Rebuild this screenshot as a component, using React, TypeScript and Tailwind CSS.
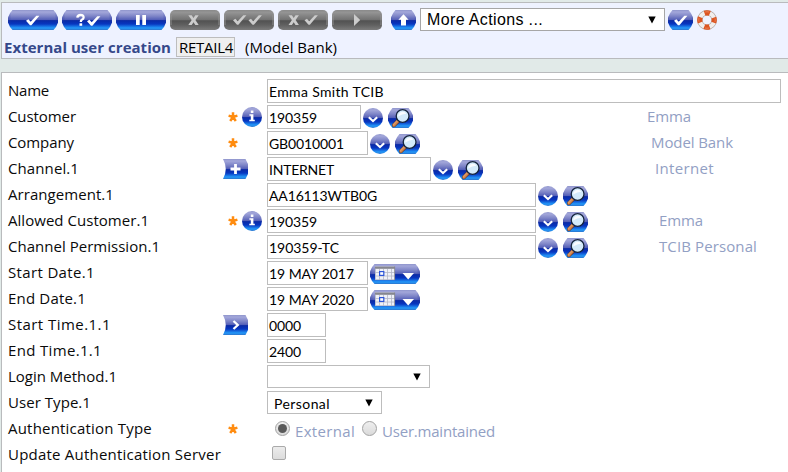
import { useLayoutEffect, useRef, useState, type ReactNode } from 'react';

const LABEL = "font-['Open_Sans','Noto_Sans',sans-serif] text-[15px]";
const VALUE = "font-['Lato','Noto_Sans',sans-serif] text-[14px]";

/* Text whose letter spacing is set so that it fills a given width. */
function Fit({ w, className = '', children }: { w: number; className?: string; children: string }) {
  const ref = useRef<HTMLSpanElement>(null);
  const [spacing, setSpacing] = useState(0);
  useLayoutEffect(() => {
    if (ref.current) {
      const natural = ref.current.getBoundingClientRect().width;
      setSpacing((w - natural) / children.length);
    }
  }, []);
  return (
    <span ref={ref} className={`inline-block whitespace-pre ${className}`} style={{ letterSpacing: `${spacing}px` }}>
      {children}
    </span>
  );
}

function Gradients() {
  return (
    <svg className="absolute h-0 w-0" aria-hidden="true">
      <defs>
        <linearGradient id="blue" x1="0" y1="0" x2="0" y2="1">
          <stop offset="0" stopColor="#8f95cc" />
          <stop offset="0.1" stopColor="#a3a7da" />
          <stop offset="0.3" stopColor="#7f86c8" />
          <stop offset="0.48" stopColor="#5560b8" />
          <stop offset="0.53" stopColor="#0a2aa6" />
          <stop offset="0.7" stopColor="#0736c0" />
          <stop offset="0.9" stopColor="#2399fa" />
          <stop offset="1" stopColor="#2c74cc" />
        </linearGradient>
        <linearGradient id="gray" x1="0" y1="0" x2="0" y2="1">
          <stop offset="0" stopColor="#8a8a8a" />
          <stop offset="0.12" stopColor="#949494" />
          <stop offset="0.48" stopColor="#727272" />
          <stop offset="0.54" stopColor="#525252" />
          <stop offset="0.75" stopColor="#606060" />
          <stop offset="1" stopColor="#7c7c7c" />
        </linearGradient>
        <linearGradient id="side" x1="0" y1="0" x2="1" y2="0">
          <stop offset="0" stopColor="#2a3aa0" stopOpacity="0.35" />
          <stop offset="0.07" stopColor="#2a3aa0" stopOpacity="0" />
          <stop offset="0.93" stopColor="#2a3aa0" stopOpacity="0" />
          <stop offset="1" stopColor="#2a3aa0" stopOpacity="0.35" />
        </linearGradient>
        <linearGradient id="handle" x1="0" y1="0" x2="1" y2="1">
          <stop offset="0" stopColor="#f3c090" />
          <stop offset="1" stopColor="#b85a20" />
        </linearGradient>
      </defs>
    </svg>
  );
}

const WIDE = 'M4.5 0H45.5Q48.5 3 50 7.5V12.5Q48.5 17 45.5 20H4.5Q1.5 17 0 12.5V7.5Q1.5 3 4.5 0Z';
const SHORT = 'M4.5 0H20.5Q23.5 3 25 7.5V12.5Q23.5 17 20.5 20H4.5Q1.5 17 0 12.5V7.5Q1.5 3 4.5 0Z';

function WideButton({ gray, children }: { gray?: boolean; children: ReactNode }) {
  return (
    <svg width="50" height="20" viewBox="0 0 50 20" className="shrink-0">
      {gray ? (
        <>
          <rect width="50" height="20" rx="5" fill="url(#gray)" />
          <path d="M1 5V15M49 5V15" stroke="#9a9a9a" strokeWidth="1.2" opacity="0.7" />
        </>
      ) : (
        <>
          <path d={WIDE} fill="url(#blue)" />
          <path d={WIDE} fill="url(#side)" />
        </>
      )}
      {children}
    </svg>
  );
}

function ShortButton({ children }: { children: ReactNode }) {
  return (
    <svg width="25" height="20" viewBox="0 0 25 20" className="shrink-0">
      <path d={SHORT} fill="url(#blue)" />
      <path d={SHORT} fill="url(#side)" />
      {children}
    </svg>
  );
}

const CHECK = 'M0 5.2L2.4 3.7L4.7 6.2L10.3 0.3L13.4 0.3L5.4 9.8H4Z';
const CROSS = 'M0 0H3.4L5.2 2.6L7 0H10.4L7.1 4.7L10.4 9.6H7L5.2 6.9L3.4 9.6H0L3.4 4.7Z';

function Lifebuoy() {
  return (
    <svg width="20" height="20" viewBox="0 0 20 20" className="shrink-0">
      <circle cx="10" cy="10" r="7.2" fill="none" stroke="#b3a9a3" strokeWidth="5.4" />
      <circle cx="10" cy="10" r="7.2" fill="none" stroke="#f1eeec" strokeWidth="4" />
      <circle
        cx="10" cy="10" r="7.2" fill="none" stroke="#dc5420" strokeWidth="5.2"
        strokeDasharray="5.4 5.91" strokeDashoffset="2.7"
      />
      <circle cx="10" cy="10" r="8.2" fill="none" stroke="#f0906a" strokeWidth="1" strokeDasharray="4 8.88" strokeDashoffset="2" opacity="0.7" />
    </svg>
  );
}

function Chevron() {
  return (
    <svg width="20" height="20" viewBox="0 0 20 20" className="shrink-0">
      <circle cx="10" cy="10" r="10" fill="url(#blue)" />
      <path d="M5.8 9.2L10 13L14.2 9.2" fill="none" stroke="#fff" strokeWidth="2.1" />
    </svg>
  );
}

function Info() {
  return (
    <svg width="20" height="20" viewBox="0 0 20 20" className="shrink-0">
      <circle cx="10" cy="10" r="10" fill="url(#blue)" />
      <path d="M8.8 3.5H11.4V6H8.8ZM7.4 7.3H11.4V12.7H12.8V14.2H7.3V12.7H8.8V8.8H7.4Z" fill="#fff" />
    </svg>
  );
}

function Search() {
  return (
    <ShortButton>
      <path d="M10.5 12.5L6 17.2" stroke="#5a3020" strokeWidth="4" strokeLinecap="round" />
      <path d="M10.2 12.8L6 17.1" stroke="url(#handle)" strokeWidth="3" strokeLinecap="round" />
      <circle cx="14.6" cy="8" r="6.4" fill="#d3eafa" stroke="#14233c" strokeWidth="1.3" />
      <path d="M10.3 8.6A4.4 4.4 0 0 1 18.4 5.8Q14 6 10.3 8.6Z" fill="#fff" opacity="0.85" />
    </ShortButton>
  );
}

function Calendar() {
  return (
    <WideButton>
      <rect x="5" y="2.5" width="20" height="13.5" fill="#eff1f8" />
      <path d="M5.5 5V16M9.5 5V16M13.5 5V16M17.5 5V16M21.5 5V16M5 8.5H25M5 12H25M5 15.6H25" stroke="#b4b8c6" strokeWidth="0.8" />
      <rect x="5" y="2.5" width="20" height="2.3" fill="#85868e" />
      <path d="M24.6 2.5V16" stroke="#85868e" strokeWidth="0.9" />
      <rect x="9.6" y="7.6" width="4.2" height="3.8" fill="#fff" stroke="#2d55d8" strokeWidth="1.2" />
      <path d="M32.5 9H44L38.2 15.5Z" fill="#fff" />
    </WideButton>
  );
}

function Tag({ kind }: { kind: 'plus' | 'arrow' }) {
  return (
    <svg width="25" height="20" viewBox="0 0 25 20" className="shrink-0">
      <path d="M0 0H22.5L25 5V15L22.5 20H0Q5.5 10 0 0Z" fill="url(#blue)" />
      {kind === 'plus' ? (
        <path d="M12.5 5V15M7.5 10H17.5" stroke="#fff" strokeWidth="2.8" />
      ) : (
        <path d="M10.5 6L14.8 10L10.5 14" fill="none" stroke="#fff" strokeWidth="2.3" />
      )}
    </svg>
  );
}

function Asterisk() {
  return (
    <svg width="10" height="10" viewBox="0 0 10 10" className="mt-[7px] shrink-0">
      <path d="M5 5V0.3M5 5L0.6 3.6M5 5L9.4 3.6M5 5L2.2 9M5 5L7.8 9" stroke="#ff8c10" strokeWidth="2.5" />
    </svg>
  );
}

function Caret() {
  return (
    <svg width="8" height="8" viewBox="0 0 8 8" className="shrink-0">
      <path d="M0.3 0.5H7.7L4 7.5Z" fill="#000" />
    </svg>
  );
}

function Field({ box, w, children }: { box: string; w: number; children: string }) {
  return (
    <div className={`flex h-6 shrink-0 items-center border border-[#bdbdbd] bg-white pl-[1px] pt-[2px] leading-none text-black ${VALUE} ${box}`}>
      <Fit w={w}>{children}</Fit>
    </div>
  );
}

function Lookup() {
  return (
    <div className="ml-[2px] mt-[3px] flex gap-[5px]">
      <Chevron />
      <Search />
    </div>
  );
}

function Note({ w, className, children }: { w: number; className: string; children: string }) {
  return (
    <div className={`mr-auto leading-[22px] text-[#92a0c4] ${LABEL} ${className}`}>
      <Fit w={w}>{children}</Fit>
    </div>
  );
}

type RowProps = {
  label: string;
  w: number;
  required?: boolean;
  info?: boolean;
  tag?: 'plus' | 'arrow';
  children: ReactNode;
};

function Row({ label, w, required, info, tag, children }: RowProps) {
  return (
    <div className="flex h-[26px] items-start">
      <div className={`w-[215px] shrink-0 leading-[22px] text-[#0a0a0a] ${LABEL}`}>
        <Fit w={w}>{label}</Fit>
      </div>
      <div className={`flex w-11 shrink-0 items-start ${required ? 'pl-[5px]' : ''}`}>
        {required && <Asterisk />}
        {info && <div className="ml-1 mt-[2px]"><Info /></div>}
        {tag && <div className="mt-[2px]"><Tag kind={tag} /></div>}
      </div>
      {children}
    </div>
  );
}

function Radio({ on }: { on?: boolean }) {
  return (
    <span className="mt-1 flex h-[15px] w-[15px] shrink-0 items-center justify-center rounded-full border border-[#a2a2a2] bg-gradient-to-b from-[#efefef] to-[#dadada]">
      {on && <span className="h-[9px] w-[9px] rounded-full bg-[#5a5a5a]" />}
    </span>
  );
}

export default function App() {
  return (
    <div className="h-[472px] w-[788px] overflow-hidden bg-[#e1eae8] pl-px pt-[2px]">
      <Gradients />
      <header className="h-[57px] w-[800px] border border-[#b9bbbd] bg-[#eef2ff]">
        <div className="flex pl-[6px] pt-[5px]">
          <div className="mt-[2px] flex gap-1">
            <WideButton><path d={CHECK} transform="translate(18 5.5)" fill="#fff" /></WideButton>
            <WideButton>
              <path d="M15.3 7.6Q15.6 5 18.6 5Q21.8 5 21.6 7.6Q21.5 9 19.8 9.8Q18.8 10.4 18.8 12" fill="none" stroke="#fff" strokeWidth="2.3" />
              <rect x="17.5" y="13.3" width="2.7" height="2.5" fill="#fff" />
              <path d={CHECK} transform="translate(25 6)" fill="#fff" />
            </WideButton>
            <WideButton><path d="M20 5H23.7V15H20ZM26.3 5H30V15H26.3Z" fill="#fff" /></WideButton>
            <WideButton gray><path d={CROSS} transform="translate(18.3 5.3)" fill="#ccc" /></WideButton>
            <WideButton gray>
              <path d={CHECK} transform="translate(9 5)" fill="#ccc" />
              <path d={CHECK} transform="translate(24.5 5)" fill="#ccc" />
            </WideButton>
            <WideButton gray>
              <path d={CROSS} transform="translate(10.5 5.3)" fill="#ccc" />
              <path d={CHECK} transform="translate(26.5 5)" fill="#ccc" />
            </WideButton>
            <WideButton gray><path d="M22 4L28.2 10L22 16Z" fill="#ccc" /></WideButton>
          </div>
          <div className="ml-[9px] mt-[2px]">
            <ShortButton><path d="M12.5 4.2L17.6 9.7H15V15.4H10V9.7H7.4Z" fill="#fff" /></ShortButton>
          </div>
          <div className="ml-1 flex h-[23px] w-[245px] items-center justify-between border border-[#a6a6a6] bg-white pl-[6px] pr-[8px] font-['Liberation_Sans',Arial,sans-serif] text-[16px] leading-none text-black">
            <Fit w={116}>More Actions ...</Fit>
            <Caret />
          </div>
          <div className="ml-[3px] mt-[2px] flex gap-1">
            <ShortButton><path d={CHECK} transform="translate(6 5.5)" fill="#fff" /></ShortButton>
            <Lifebuoy />
          </div>
        </div>
        <div className={`mt-[6px] flex h-5 leading-[20px] ${LABEL}`}>
          <div className="ml-[2px] w-[172px] font-bold text-[#35488a]"><Fit w={167}>External user creation</Fit></div>
          <div className="flex h-5 w-[59px] items-center border border-[#bdbdbd] bg-[#efefef] pl-[2px] leading-[18px] text-black"><Fit w={54}>RETAIL4</Fit></div>
          <div className="ml-[10px] text-black"><Fit w={92}>(Model Bank)</Fit></div>
        </div>
      </header>

      <main className="mt-[13px] h-[410px] w-[800px] border border-[#b9bbbd] bg-white pl-[6px] pt-[6px]">
        <Row label="Name" w={41}><Field box="w-[514px]" w={115}>Emma Smith TCIB</Field></Row>
        <Row label="Customer" w={68} required info>
          <Field box="w-[94px]" w={48}>190359</Field>
          <Lookup />
          <Note w={44} className="ml-[234px]">Emma</Note>
        </Row>
        <Row label="Company" w={66} required>
          <Field box="w-[101px]" w={75}>GB0010001</Field>
          <Lookup />
          <Note w={82} className="ml-[231px]">Model Bank</Note>
        </Row>
        <Row label="Channel.1" w={71} tag="plus">
          <Field box="w-[164px]" w={65}>INTERNET</Field>
          <Lookup />
          <Note w={59} className="ml-[172px]">Internet</Note>
        </Row>
        <Row label="Arrangement.1" w={106}><Field box="w-[269px]" w={108}>AA16113WTB0G</Field><Lookup /></Row>
        <Row label="Allowed Customer.1" w={141} required info>
          <Field box="w-[269px]" w={48}>190359</Field>
          <Lookup />
          <Note w={44} className="ml-[71px]">Emma</Note>
        </Row>
        <Row label="Channel Permission.1" w={152}>
          <Field box="w-[269px]" w={70}>190359-TC</Field>
          <Lookup />
          <Note w={98} className="ml-[71px]">TCIB Personal</Note>
        </Row>
        <Row label="Start Date.1" w={87}>
          <Field box="w-[101px]" w={85}>19 MAY 2017</Field>
          <div className="ml-[2px] mt-[3px]"><Calendar /></div>
        </Row>
        <Row label="End Date.1" w={78}>
          <Field box="w-[101px]" w={85}>19 MAY 2020</Field>
          <div className="ml-[2px] mt-[3px]"><Calendar /></div>
        </Row>
        <Row label="Start Time.1.1" w={103} tag="arrow"><Field box="w-[59px]" w={32}>0000</Field></Row>
        <Row label="End Time.1.1" w={94}><Field box="w-[59px]" w={32}>2400</Field></Row>
        <Row label="Login Method.1" w={109}>
          <div className="flex h-[23px] w-[163px] items-center justify-end border border-[#bdbdbd] bg-white pr-[8px]"><Caret /></div>
        </Row>
        <Row label="User Type.1" w={83}>
          <div className={`flex h-[23px] w-[115px] items-center justify-between border border-[#bdbdbd] bg-white pl-[6px] pr-[8px] leading-none text-black ${VALUE}`}>
            <div className="pt-[2px]"><Fit w={56}>Personal</Fit></div>
            <Caret />
          </div>
        </Row>
        <Row label="Authentication Type" w={144} required>
          <div className={`flex pl-2 leading-[28px] text-[#92a0c4] ${LABEL}`}>
            <Radio on />
            <div className="ml-[5px] w-[67px]"><Fit w={60}>External</Fit></div>
            <Radio />
            <div className="ml-[5px]"><Fit w={113}>User.maintained</Fit></div>
          </div>
        </Row>
        <Row label="Update Authentication Server" w={213}>
          <span className="ml-[5px] mt-[3px] h-[14px] w-[14px] rounded-[2px] border border-[#aaa] bg-gradient-to-b from-[#ececec] to-[#dcdcdc]" />
        </Row>
      </main>
    </div>
  );
}
